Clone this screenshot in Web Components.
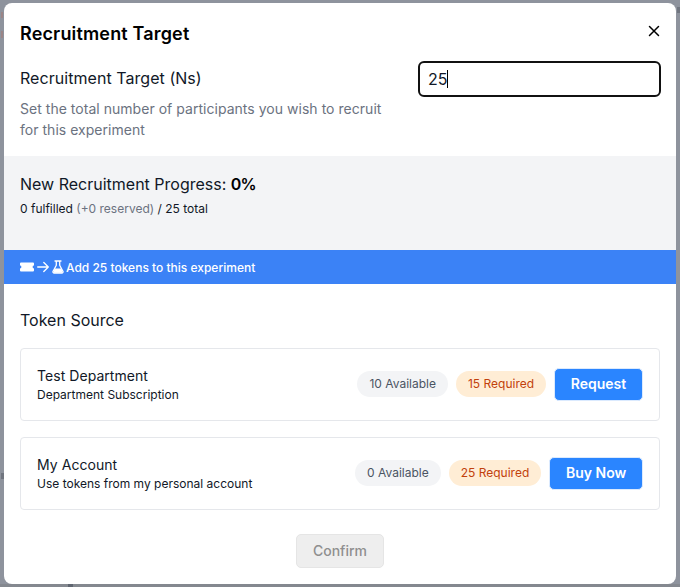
<!DOCTYPE html>
<html lang="en"><head><meta charset="utf-8"><title>Recruitment Target</title>
<style>
html,body{margin:0;height:587px;overflow:hidden;background:#8e939d;font-family:Inter,"Liberation Sans",sans-serif}
body{display:flex;justify-content:center;padding-top:3px;box-sizing:border-box;position:relative}
</style></head><body>
<app-backdrop></app-backdrop>
<recruit-modal>
  <span slot="title">Recruitment Target</span>
  <target-field></target-field>
  <progress-panel></progress-panel>
  <token-banner>Add 25 tokens to this experiment</token-banner>
  <token-source heading="Token Source">
    <source-card name="Test Department" sub="Department Subscription" avail="10 Available" req="15 Required" action="Request"></source-card>
    <source-card name="My Account" sub="Use tokens from my personal account" avail="0 Available" req="25 Required" action="Buy Now"></source-card>
  </token-source>
</recruit-modal>
<script>
function def(name, html, init){
  const t=document.createElement('template');t.innerHTML=html;
  customElements.define(name,class extends HTMLElement{
    connectedCallback(){
      if(this.shadowRoot)return;
      const r=this.attachShadow({mode:'open'});r.appendChild(t.content.cloneNode(true));
      if(init)init(r,this);
    }
  });
}
def('app-backdrop',`<style>
:host{position:absolute;inset:0;display:block;overflow:hidden}
i{position:absolute;display:block}
</style>
<i style="left:0;right:0;bottom:0;height:3px;background:#84888f"></i>
<i style="left:1px;top:12px;width:2px;height:6px;background:#9b8587"></i>
<i style="left:1px;top:31px;width:2px;height:7px;background:#9b8587"></i>
<i style="left:677px;top:7px;width:3px;height:6px;background:#70757f"></i>
<i style="left:1px;top:473px;width:3px;height:6px;background:#70757f"></i>
<i style="left:68px;top:584px;width:5px;height:3px;background:#5f6570"></i>`);
def('recruit-modal',`<style>
:host{display:block;position:relative;width:672px;height:581px;background:#fff;border-radius:8px;overflow:hidden;color:#000}
header{display:flex;justify-content:space-between;align-items:center;height:22px;padding:20px 14px 0 16px}
h2{margin:0;font-size:18px;line-height:22px;font-weight:600;letter-spacing:.16px}
svg{display:block;margin-top:-6px}
</style>
<header><h2><slot name="title"></slot></h2>
<svg width="16" height="16" viewBox="0 0 16 16" fill="none" stroke="#000" stroke-width="1.5" stroke-linecap="round" aria-label="Close"><path d="M3.500 3.500l9 9M12.500 3.500l-9 9"/></svg></header>
<slot></slot>`);
def('target-field',`<style>
:host{display:flex;justify-content:space-between;height:90px;padding:21px 15px 0 16px}
.l{width:370px}
label{display:block;font-size:16px;line-height:24px;color:#111827;letter-spacing:.05px}
p{margin:8px 0 0;font-size:14px;line-height:21px;color:#6b7280;letter-spacing:.03px}
.i{width:231px;height:32px;border:2px solid #111;border-radius:6px;display:flex;align-items:center;padding-left:8px;font-size:16px;color:#111827;margin-top:-5px}
.c{display:inline-block;width:1px;height:18px;background:#000;margin-left:0}
</style>
<div class="l"><label>Recruitment Target (Ns)</label><p>Set the total number of participants you wish to recruit for this experiment</p></div>
<div class="i">25<span class="c"></span></div>`);
def('progress-panel',`<style>
:host{display:block;height:94px;background:#f3f4f6;padding:0 16px;color:#111827}
.a{font-size:16px;line-height:24px;padding-top:16px}
b{font-weight:600;color:#000;letter-spacing:-.8px}
.b{font-size:12px;line-height:16px;margin-top:5px}
i{font-style:normal;color:#6b7280}
</style>
<div class="a">New Recruitment Progress: <b>0%</b></div>
<div class="b">0 fulfilled <i>(+0 reserved)</i> / 25 total</div>`);
def('token-banner',`<style>
:host{display:flex;align-items:center;gap:3px;height:34px;background:#3b82f6;color:#fff;font-size:12px;font-weight:500;padding-left:16px}
svg{display:block;flex:none}
span{margin-left:-1px}
</style>
<svg width="14" height="10" viewBox="0 0 14 10" fill="#fff"><path d="M1 .5h12a1 1 0 0 1 1 1v2.100a1.400 1.400 0 0 0 0 2.800V8.500a1 1 0 0 1-1 1H1a1 1 0 0 1-1-1V6.400a1.400 1.400 0 0 0 0-2.800V1.500a1 1 0 0 1 1-1z"/></svg>
<svg width="12" height="12" viewBox="0 0 12 12" fill="none" stroke="#fff" stroke-width="1.300" stroke-linecap="round" stroke-linejoin="round"><path d="M.7 6h10.600M6.800 1.500L11.300 6l-4.500 4.500"/></svg>
<svg width="12" height="14" viewBox="0 0 12 14" fill="none" stroke="#fff" stroke-width="1.300" stroke-linejoin="round" stroke-linecap="round"><path d="M3 1h6M4.300 1v4.200L1.100 11.200A1.200 1.200 0 0 0 2.200 13h7.600a1.200 1.200 0 0 0 1.100-1.800L7.700 5.200V1"/><path d="M2.500 8.500h7l1 3.700-.7.5H2.200l-.7-.5z" fill="#fff" stroke="none"/></svg>
<span><slot></slot></span>`);
def('token-source',`<style>
:host{display:flex;flex-direction:column;gap:16px;padding:24px 16px 0}
h3{margin:0;font-size:16px;line-height:24px;font-weight:400;color:#111827}
.f{display:flex;justify-content:center;margin-top:8px}
button{width:88px;height:34px;box-sizing:border-box;border:1px solid #e5e5e5;border-radius:5px;background:#eee;color:#8f8f8f;font:500 14px Inter,"Liberation Sans",sans-serif;padding:0 0 2px}
</style>
<h3></h3><slot></slot><div class="f"><button disabled>Confirm</button></div>`,(r,h)=>{r.querySelector('h3').textContent=h.getAttribute('heading')});
def('source-card',`<style>
:host{display:flex;align-items:center;justify-content:space-between;height:73px;box-sizing:border-box;border:1px solid #e5e7eb;border-radius:4px;padding:0 16px;color:#111827}
.n{font-size:14px;line-height:20px;letter-spacing:.05px}
.s{font-size:12px;line-height:16px;margin-top:1px}
.t{margin-top:-1px}
.r{display:flex;align-items:center;gap:8px;margin-top:-1px}
.p{font-size:12px;line-height:26px;height:26px;padding:0 12px;border-radius:13px}
.av{background:#f3f4f6;color:#4b5563}
.rq{background:#ffedd5;color:#c2410c}
button{height:33px;padding:0 15.75px 2px;border:1px solid #dbeafe;border-radius:5px;background:#2a85ff;color:#fff;font:600 14px Inter,"Liberation Sans",sans-serif}
</style>
<div class="t"><div class="n"></div><div class="s"></div></div>
<div class="r"><span class="p av"></span><span class="p rq"></span><button></button></div>`,(r,h)=>{
  for(const [s,a] of [['.n','name'],['.s','sub'],['.av','avail'],['.rq','req'],['button','action']])r.querySelector(s).textContent=h.getAttribute(a);
});
</script>
</body></html>
